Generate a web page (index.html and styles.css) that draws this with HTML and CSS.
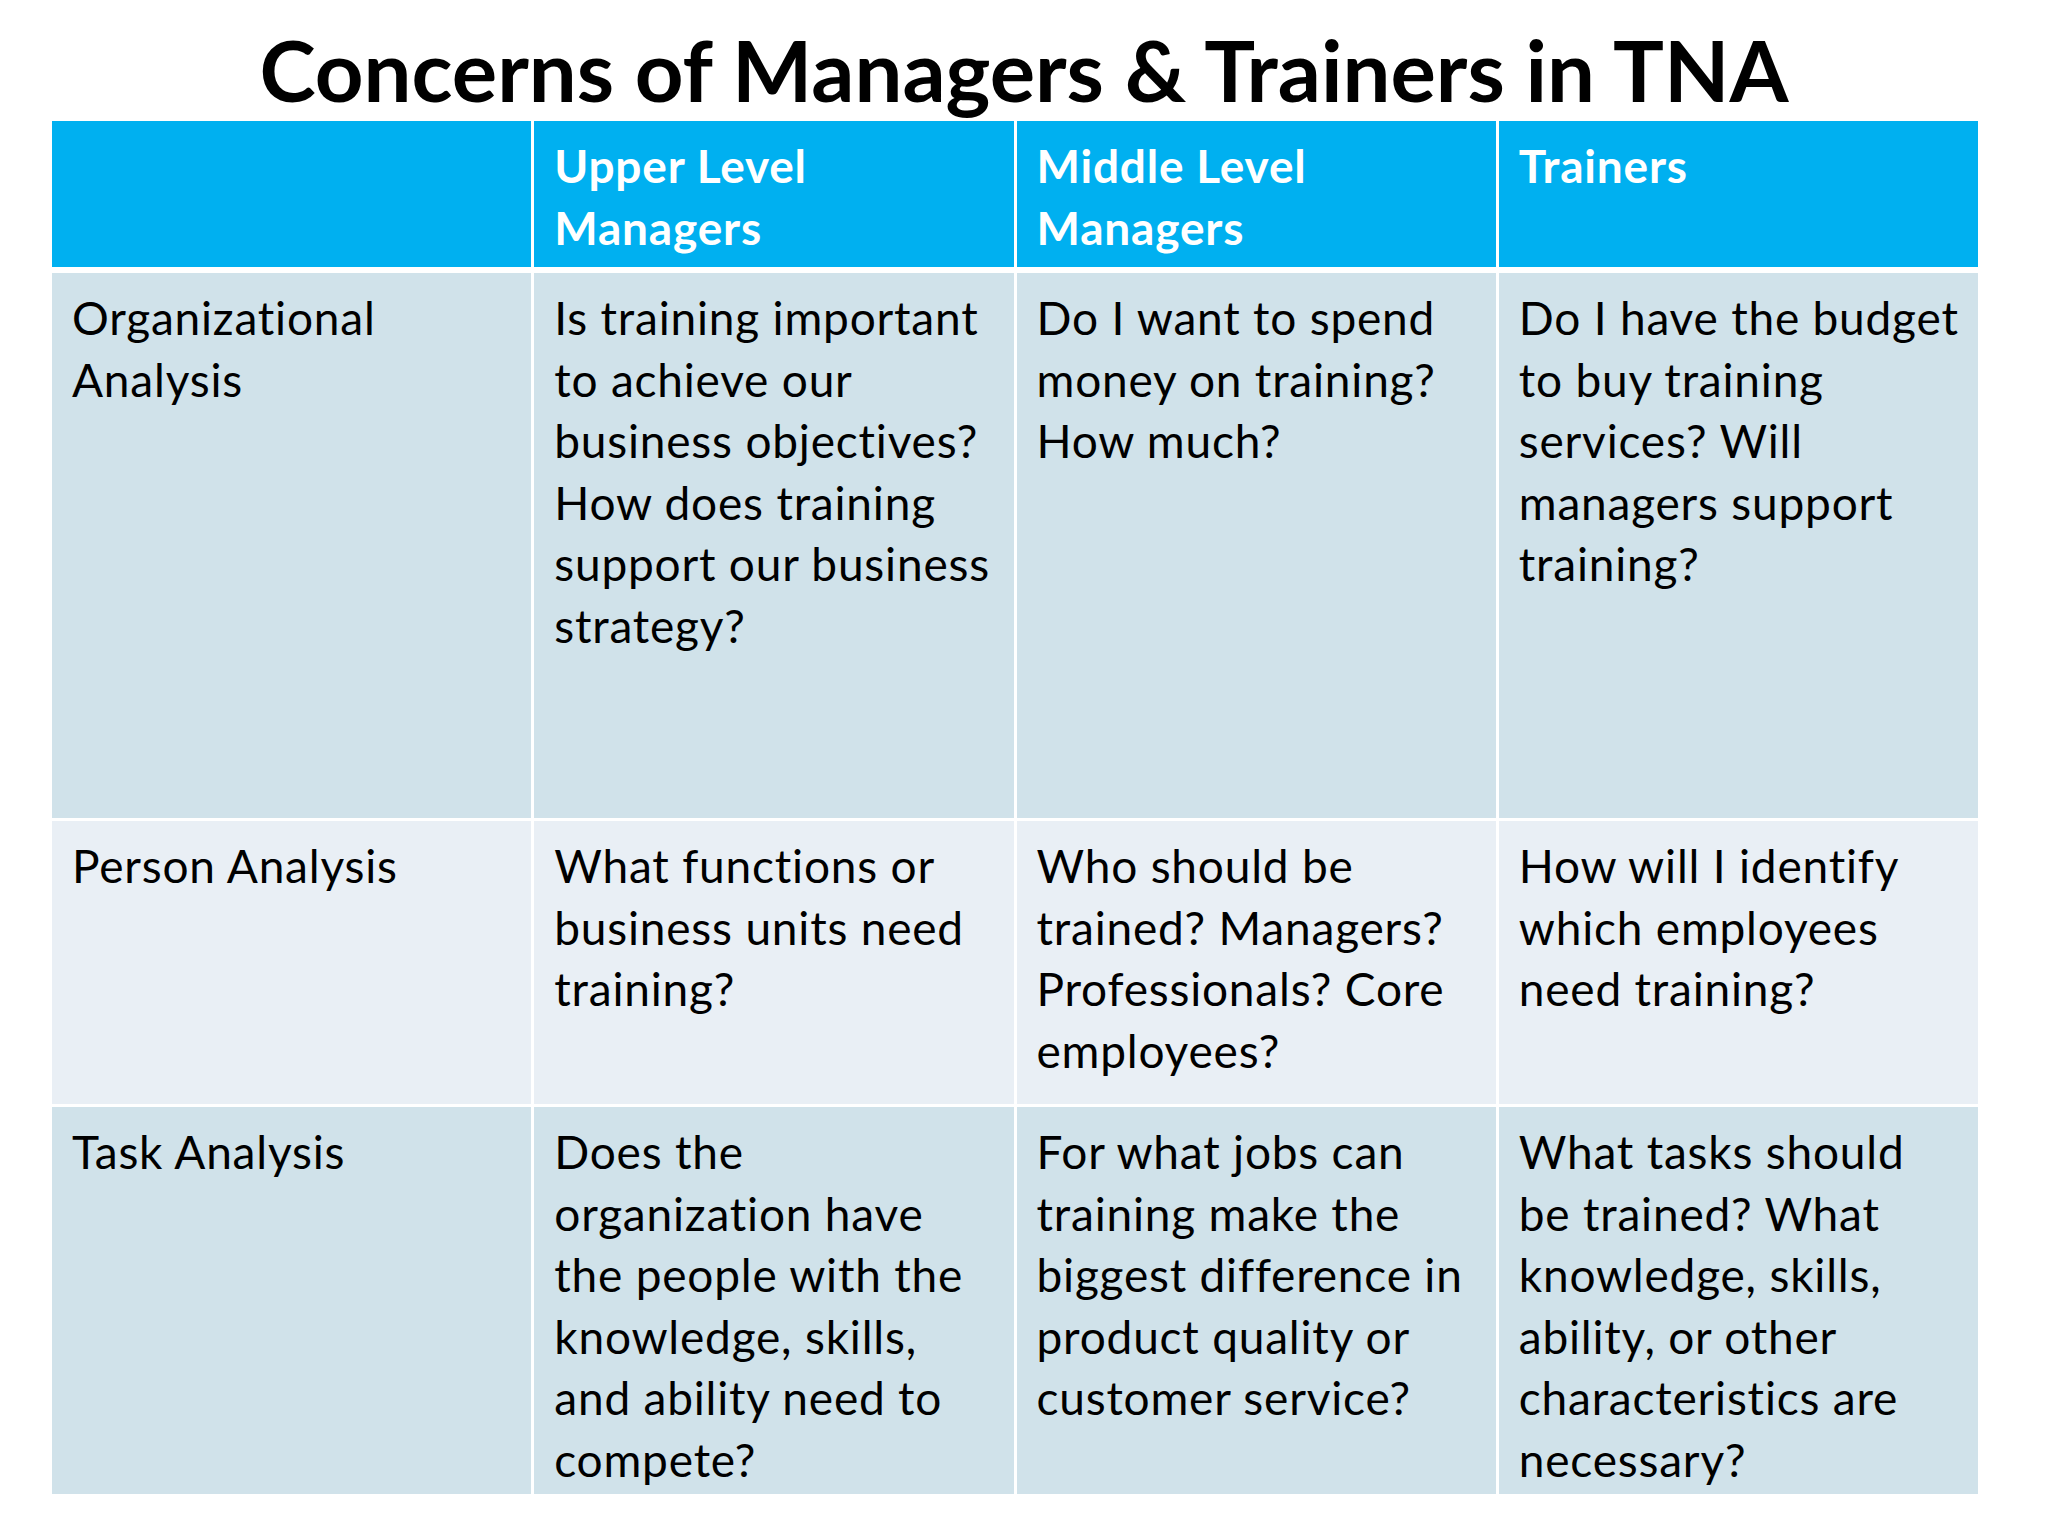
FILE: index.html
```html
<!DOCTYPE html>
<html lang="en">
<head>
<meta charset="utf-8">
<title>Concerns of Managers &amp; Trainers in TNA</title>
<link rel="stylesheet" href="styles.css">
</head>
<body>
<div class="slide">
  <h1 class="title">Concerns of Managers &amp; Trainers in TNA</h1>
  <div class="table">
    <div class="row head">
      <div class="cell"></div>
      <div class="cell">Upper Level<br>Managers</div>
      <div class="cell">Middle Level<br>Managers</div>
      <div class="cell">Trainers</div>
    </div>
    <div class="row band1 r1">
      <div class="cell">Organizational<br>Analysis</div>
      <div class="cell">Is training important<br>to achieve our<br>business objectives?<br>How does training<br>support our business<br>strategy?</div>
      <div class="cell">Do I want to spend<br>money on training?<br>How much?</div>
      <div class="cell">Do I have the budget<br>to buy training<br>services? Will<br>managers support<br>training?</div>
    </div>
    <div class="row band2 r2">
      <div class="cell">Person Analysis</div>
      <div class="cell">What functions or<br>business units need<br>training?</div>
      <div class="cell">Who should be<br>trained? Managers?<br>Professionals? Core<br>employees?</div>
      <div class="cell">How will I identify<br>which employees<br>need training?</div>
    </div>
    <div class="row band1 r3">
      <div class="cell">Task Analysis</div>
      <div class="cell">Does the<br>organization have<br>the people with the<br>knowledge, skills,<br>and ability need to<br>compete?</div>
      <div class="cell">For what jobs can<br>training make the<br>biggest difference in<br>product quality or<br>customer service?</div>
      <div class="cell">What tasks should<br>be trained? What<br>knowledge, skills,<br>ability, or other<br>characteristics are<br>necessary?</div>
    </div>
  </div>
</div>
</body>
</html>
```

FILE: styles.css
```css
html, body {
  margin: 0;
  padding: 0;
  background: #ffffff;
}

.slide {
  width: 2048px;
  height: 1536px;
  padding-top: 19px;
  box-sizing: border-box;
  font-family: Lato, "Open Sans", "Liberation Sans", sans-serif;
}

.title {
  margin: 0 0 2px 0;
  height: 100px;
  line-height: 100px;
  font-size: 85px;
  font-weight: 700;
  color: #000000;
  text-align: center;
  white-space: nowrap;
}

.table {
  margin-left: 52px;
  width: 1926px;
  display: flex;
  flex-direction: column;
  gap: 3px;
}

.row {
  display: grid;
  grid-template-columns: repeat(4, 1fr);
  column-gap: 3px;
}

.cell {
  padding: 14px 6px 0 20px;
  font-size: 46px;
  letter-spacing: 0.8px;
  line-height: 61.5px;
  color: #000000;
  white-space: nowrap;
  overflow: hidden;
}

.head {
  height: 146px;
  margin-bottom: 3px;
}

.head .cell {
  background: #00b0f0;
  color: #ffffff;
  font-weight: 700;
}

.band1 .cell {
  background: #d0e2ea;
}

.band2 .cell {
  background: #e9eff5;
}

.r1 { height: 545px; }
.r2 { height: 283px; }
.r3 { height: 387px; }
```
